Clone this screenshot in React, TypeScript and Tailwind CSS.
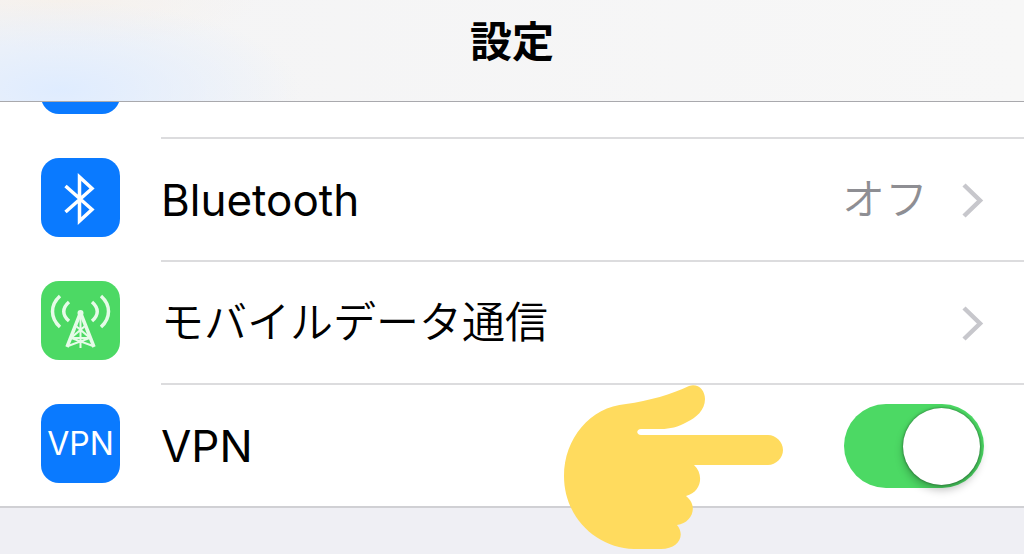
import { useState, type ReactNode } from "react";

function BluetoothIcon() {
  return (
    <svg viewBox="0 0 79 79" className="size-full" fill="none" stroke="white" strokeWidth="3.5" aria-hidden="true">
      <path d="M24.500 28 51 51.500 38.500 63V19L51 30.500 24.500 54" strokeMiterlimit="10" />
    </svg>
  );
}

function AntennaIcon() {
  return (
    <svg viewBox="0 0 79 79" className="size-full" fill="none" stroke="#e6fbe8" aria-hidden="true">
      <path d="M19 15C9 24 9 37 19 46M60 15C70 24 70 37 60 46" strokeWidth="3.500" />
      <path d="M28 21C21 27 21 34 28 40M51 21C58 27 58 34 51 40" strokeWidth="3.500" />
      <path d="M39 33 26 66M40 33 53 66" strokeWidth="3.500" />
      <path d="M39.500 33V67M35 45 49 57 27 65M44 45 30 57 52 65M31 57H48" strokeWidth="2" />
      <circle cx="39.500" cy="32" r="3" fill="#e6fbe8" stroke="none" />
    </svg>
  );
}

function Chevron() {
  return (
    <svg viewBox="0 0 24 38" className="h-[38px] w-6 shrink-0" fill="none" stroke="#c7c7cc" strokeWidth="4.500" aria-hidden="true">
      <path d="M4 4 20 19.500 4 35" />
    </svg>
  );
}

function PointingHand() {
  return (
    <svg
      viewBox="0 0 220 166"
      className="pointer-events-none absolute right-[240px] top-0 h-[166px] w-[220px]"
      aria-hidden="true"
    >
      <path
        fill="#ffdb5e"
        d="M62 19C85 16 108 9 125 1C134-2 141 5 141 14C141 25 132 33 123 37C114 42 106 44 97 44H77C72 44 72 50 77 50H204C212 50 219 57 219 65C219 73 212 80 204 80H130C140 89 138 107 122 111C135 121 128 138 113 140C122 151 114 164 97 164H70C32 163 0 132 0 91C0 54 26 22 62 19Z"
      />
    </svg>
  );
}

function AppTile({ color, children }: { color: string; children?: ReactNode }) {
  return (
    <span className={`mt-[19px] flex size-[79px] shrink-0 items-center justify-center overflow-hidden rounded-[18px] ${color}`}>
      {children}
    </span>
  );
}

function RowBody({ last = false, children }: { last?: boolean; children: ReactNode }) {
  return (
    <span
      className={`flex min-w-0 flex-1 items-center justify-between pr-10 ${
        last ? "h-[121px]" : "h-[123px] border-b-2 border-[#dcdcde]"
      }`}
    >
      {children}
    </span>
  );
}

const rowClass = "flex items-start gap-[41px] pl-[41px] text-[43px] leading-none text-black";

export default function App() {
  const [vpn, setVpn] = useState(true);

  return (
    <div className="flex min-h-screen flex-col overflow-hidden bg-[#efeff4] font-['Inter','Noto_Sans_CJK_JP',sans-serif]">
      <header className="flex h-[102px] items-center justify-center border-b border-[#a9a9ad] bg-[radial-gradient(ellipse_240px_90px_at_60px_90px,#dfecff,transparent),radial-gradient(ellipse_200px_50px_at_60px_0px,#f6f1ec,transparent),linear-gradient(to_right,#f4f4f5,#f7f7f7)] pb-[18px]">
        <h1 className="text-[42px] leading-none font-bold text-black">設定</h1>
      </header>

      <main>
        <ul className="border-b-2 border-[#d0d0d4] bg-white">
          <li className="flex h-[37px] items-end gap-[41px] overflow-hidden pl-[41px]">
            <span className="h-full w-[79px] shrink-0">
              <span className="block h-3 overflow-hidden">
                <span className="-mt-[67px] block h-[79px] rounded-[18px] bg-[#0a7aff]" />
              </span>
            </span>
            <span className="flex-1 border-b-2 border-[#dcdcde]" />
          </li>
          <li>
            <a href="#bluetooth" className={rowClass}>
              <AppTile color="bg-[#0a7aff]">
                <BluetoothIcon />
              </AppTile>
              <RowBody>
                <span className="text-[44px]">Bluetooth</span>
                <span className="flex items-center gap-8 font-[350] text-[#8e8e93]">
                  オフ
                  <Chevron />
                </span>
              </RowBody>
            </a>
          </li>
          <li>
            <a href="#mobile-data" className={rowClass}>
              <AppTile color="bg-[#4cd964]">
                <AntennaIcon />
              </AppTile>
              <RowBody>
                <span className="font-[350]">モバイルデータ通信</span>
                <Chevron />
              </RowBody>
            </a>
          </li>
          <li className="relative">
            <div className={rowClass}>
              <AppTile color="bg-[#0a7aff]">
                <span className="text-[32px] text-white" aria-hidden="true">
                  VPN
                </span>
              </AppTile>
              <RowBody last>
                <label htmlFor="vpn" className="text-[44px]">VPN</label>
                <span className="relative flex h-[84px] w-[140px]">
                  <input
                    id="vpn"
                    type="checkbox"
                    role="switch"
                    checked={vpn}
                    onChange={(event) => setVpn(event.target.checked)}
                    className="peer size-full cursor-pointer appearance-none rounded-full bg-[#d8d8dc] checked:bg-[#4cd964]"
                  />
                  <span className="pointer-events-none absolute top-1 left-1 size-[77px] rounded-full bg-white shadow-[0_5px_8px_rgba(0,0,0,0.25),0_0_3px_rgba(0,0,0,0.5)] peer-checked:right-1 peer-checked:left-auto" />
                </span>
              </RowBody>
            </div>
            <PointingHand />
          </li>
        </ul>
      </main>
    </div>
  );
}
